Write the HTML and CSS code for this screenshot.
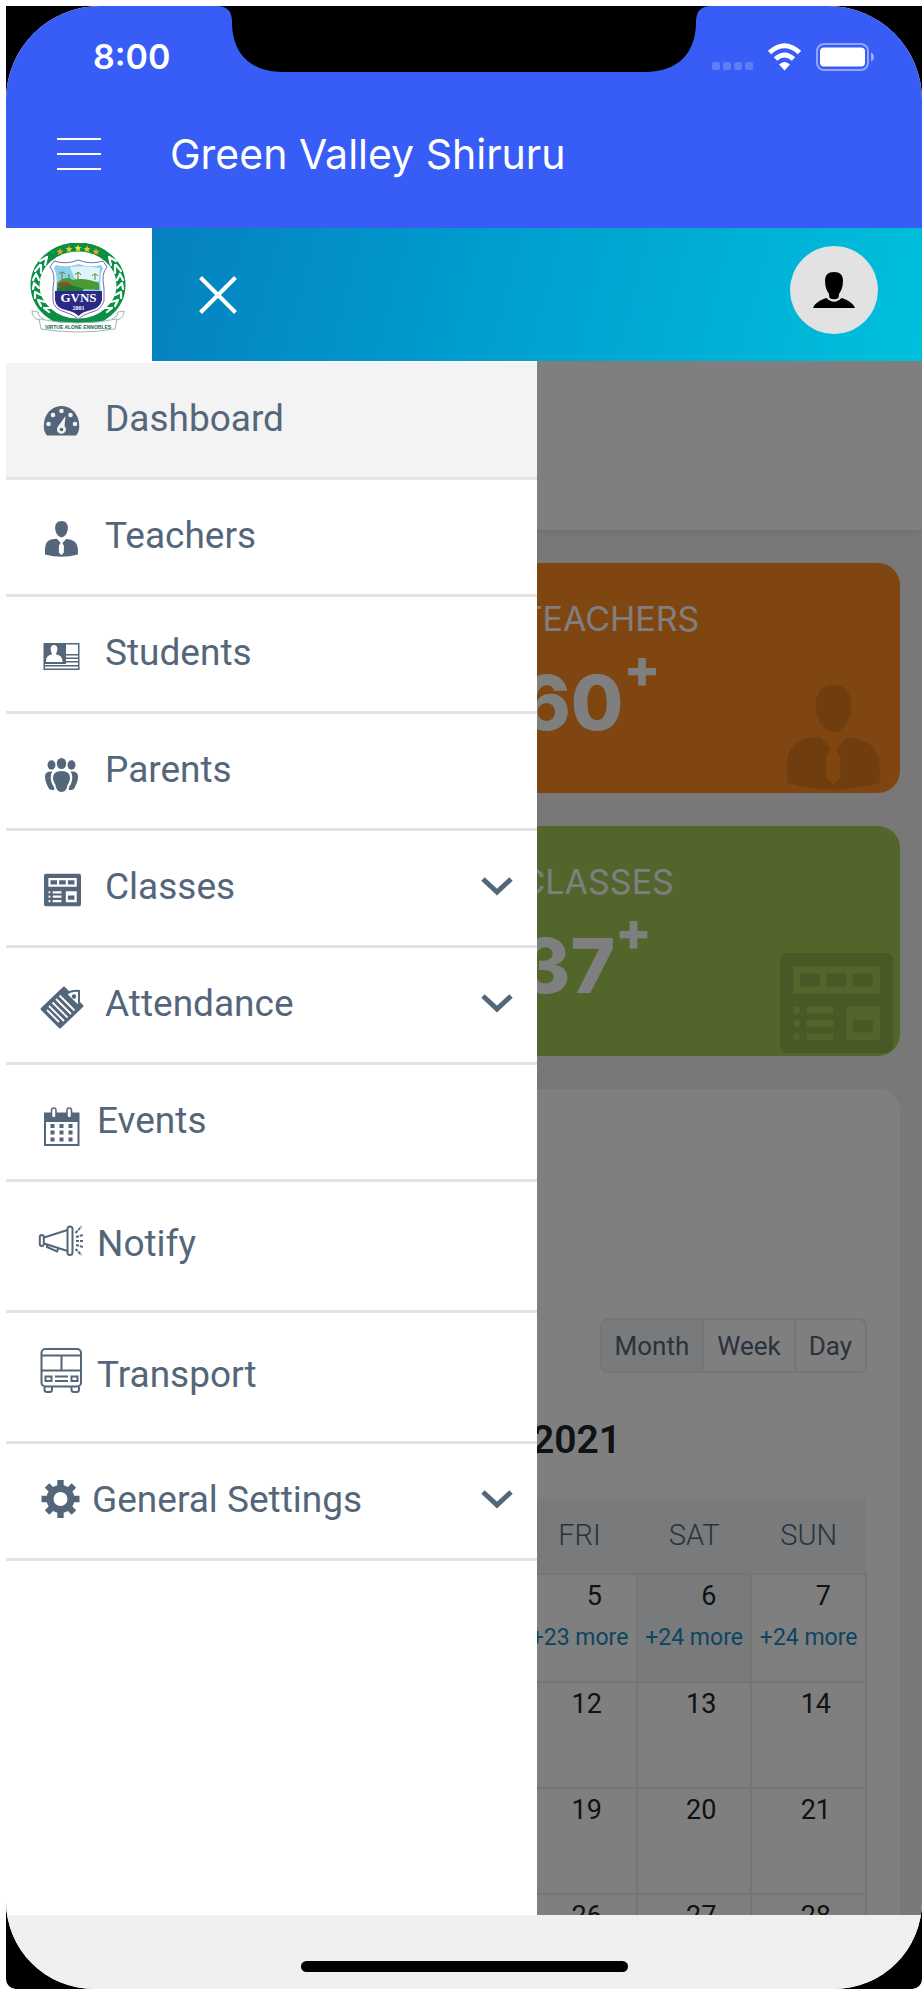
FILE: index.html
```html
<!DOCTYPE html>
<html lang="en">
<head>
<meta charset="utf-8">
<meta name="viewport" content="width=device-width, initial-scale=1">
<title>Green Valley Shiruru</title>
<link rel="stylesheet" href="styles.css">
</head>
<body>
<svg width="0" height="0" class="symbols" aria-hidden="true">
  <symbol id="person" viewBox="0 0 280 276" preserveAspectRatio="none">
    <path d="M140 0C176 0 194 22 194 52C194 84 174 124 140 124S86 84 86 52C86 22 104 0 140 0Z"/>
    <path d="M0 257V208Q4 142 75 138L100 137 132 166 118 190V242L139 262 160 242V190L148 168 180 138Q270 140 279 208V257Q140 292 0 257Z"/>
  </symbol>
  <symbol id="board" viewBox="0 0 339 260" preserveAspectRatio="none">
    <path fill-rule="evenodd" d="M20 0H319A20 18 0 0 1 339 18V242A20 18 0 0 1 319 260H20A20 18 0 0 1 0 242V18A20 18 0 0 1 20 0ZM40 35V105H300V35ZM80 140V157H160V140ZM80 174V191H160V174ZM80 209V226H160V209ZM200 140V227H300V140ZM40 148a10 9 0 1 0 20 0a10 9 0 1 0-20 0M40 183a10 9 0 1 0 20 0a10 9 0 1 0-20 0M40 218a10 9 0 1 0 20 0a10 9 0 1 0-20 0"/>
    <path d="M60 54H120V87H60ZM139 54H199V87H139ZM219 54H279V87H219ZM219 174H279V207H219Z"/>
  </symbol>
  <symbol id="chevron" viewBox="0 0 32 20">
    <path d="M2 3 16 16 30 3" fill="none" stroke="currentColor" stroke-width="5"/>
  </symbol>
</svg>
<div class="device">
  <div class="screen">
    <header class="app-header">
      <div class="status-bar">
        <span class="clock">8:00</span>
        <svg class="status-icons" width="164" height="30" viewBox="0 0 164 30" aria-hidden="true">
          <g fill="#fff" fill-opacity=".2"><rect y="20" width="8" height="8" rx="2"/><rect x="11" y="20" width="8" height="8" rx="2"/><rect x="22" y="20" width="8" height="8" rx="2"/><rect x="33" y="20" width="8" height="8" rx="2"/></g>
          <path fill="none" stroke="#fff" stroke-width="5" d="M57.500 10.500Q72.500-3 87.500 10.500M63.500 17Q72.500 9 81.500 17"/>
          <path fill="#fff" d="M67 22.500Q72.500 17.500 78 22.500L72.500 28.500Z"/>
          <rect x="105" y="2" width="51" height="26" rx="7" fill="none" stroke="#fff" stroke-opacity=".45" stroke-width="2"/>
          <rect x="108" y="5.500" width="45" height="19" rx="4" fill="#fff"/>
          <path d="M159 10.500Q162 12 162 15T159 19.500Z" fill="#fff" fill-opacity=".5"/>
        </svg>
      </div>
      <div class="nav-bar">
        <button class="menu-button" type="button" aria-label="Menu"><i></i><i></i><i></i></button>
        <h1 class="app-title">Green Valley Shiruru</h1>
      </div>
      <svg class="notch" width="494" height="66" viewBox="0 0 494 66" aria-hidden="true"><path d="M0 0C10 0 15 5 15 16C15 47 33 66 66 66H428C461 66 479 47 479 16C479 5 484 0 494 0Z"/></svg>
    </header>

    <div class="top-bar">
      <div class="brand">
        <svg width="96" height="90" viewBox="0 0 96 90" role="img" aria-label="GVNS crest">
          <ellipse cx="48" cy="42" rx="43" ry="38" fill="#fff" stroke="#0a9044" stroke-width="9"/>
          <g fill="none" stroke="#fff" stroke-width="2.200" stroke-linecap="round">
            <path d="M17 14 10 18M17 14 15 22M10 22 5 28M11 22 11 30M6 31 3 37M6 31 9 37M4 40 3 46M4 40 9 45M5 49 5 55M5 49 11 52M8 57 11 63M8 57 15 59M14 65 19 69M14 65 21 65"/>
            <path d="M79 14 86 18M79 14 81 22M86 22 91 28M85 22 85 30M90 31 93 37M90 31 87 37M92 40 93 46M92 40 87 45M91 49 91 55M91 49 85 52M88 57 85 63M88 57 81 59M82 65 77 69M82 65 75 65"/>
          </g>
          <g>
            <path fill="#f6a023" d="m30 5 1 2.500 2.500.2-2 1.700.7 2.600-2.200-1.500-2.200 1.500.7-2.600-2-1.700 2.500-.2Z"/>
            <path fill="#fbc02d" d="m39 2.500 1 2.500 2.500.2-2 1.700.7 2.600L39 8l-2.200 1.500.7-2.600-2-1.700L38 5Z"/>
            <path fill="#ffe81f" d="m48 1.500 1 2.500 2.500.2-2 1.700.7 2.600L48 7l-2.200 1.500.7-2.600-2-1.700L47 4Z"/>
            <path fill="#fbc02d" d="m57 2.500 1 2.500 2.500.2-2 1.700.7 2.600L57 8l-2.200 1.500.7-2.600-2-1.700L56 5Z"/>
            <path fill="#f6a023" d="m66 5 1 2.500 2.500.2-2 1.700.7 2.600-2.200-1.500-2.200 1.500.7-2.600-2-1.700 2.500-.2Z"/>
          </g>
          <path fill="#fff" stroke="#7b6bb0" d="M24 18Q36 22 48 17Q61 22 73 18L77 24Q71 30 74 45V58Q71 67 62 69Q52 72 48.500 76Q44 72 35 69Q24 66 23 58V45Q26 30 20 24Z"/>
          <path fill="#8cd0ea" d="M26 22Q37 25 48.500 21Q60 25 71 22L73 25Q69 32 71 50H26Q28 32 24 25Z"/>
          <path fill="#dff3f8" d="M40 24Q56 22 70 25L69 38Q50 42 44 34Z"/>
          <path fill="#4a9a35" d="M27 40Q36 32 43 37Q54 34 69 40V47L52 46 27 47Z"/>
          <path fill="#87502b" d="M28 41Q34 37 39 40L45 44 30 45Z"/>
          <path fill="#1f7a35" d="M27 45Q40 40 54 46L52 49 27 48Z"/>
          <g fill="none" stroke="#5c7f2c"><path d="M32 37V29M29 31Q32 27 35 31M39 36V31M48 37V29M45 32Q48 27 51 32M65 37V31M62 33Q65 29 68 33"/></g>
          <path fill="#2a2a84" d="M25 48H72V57Q70 65 61 67Q52 69 48.500 73Q45 69 36 67Q26 65 25 57Z"/>
          <text class="crest-name" x="48.500" y="59" text-anchor="middle">GVNS</text>
          <text class="crest-year" x="48.500" y="67" text-anchor="middle">2001</text>
          <path fill="#fff" stroke="#9db8b0" d="M9 77Q2 75 2 68L8 69 9 73 14 76M87 77Q94 75 94 68L88 69 87 73 82 76M9 76Q48 84 87 76L85 86Q48 92 11 86Z"/>
          <text class="crest-motto" x="48" y="86" text-anchor="middle">VIRTUE ALONE ENNOBLES</text>
        </svg>
      </div>
      <div class="top-actions">
        <button class="plain-button" type="button" aria-label="Close menu"><svg width="40" height="40" viewBox="0 0 40 40"><path d="M2.500 2.500 37.500 37.500M37.500 2.500 2.500 37.500" stroke="#fff" stroke-width="4"/></svg></button>
        <button class="avatar" type="button" aria-label="Profile"><svg width="44" height="38" viewBox="0 0 44 38"><path d="M22 1C28 1 31 4 31 10C31 16 29 20 27 23L26.500 27Q22 29.500 17.500 27L17 23C15 20 13 16 13 10C13 4 16 1 22 1ZM14.500 27Q22 34.500 29.500 27C36 29 41 32 43 37H1C3 32 8 29 14.500 27Z"/></svg></button>
      </div>
    </div>

    <div class="stage">
      <main class="content">
        <div class="page-head"></div>
        <section class="stats">
          <article class="stat stat-teachers">
            <h2 class="stat-label">TEACHERS</h2>
            <p class="stat-value">60<sup>+</sup></p>
            <svg class="stat-art person-art" aria-hidden="true"><use href="#person"/></svg>
          </article>
          <article class="stat stat-classes">
            <h2 class="stat-label">CLASSES</h2>
            <p class="stat-value">37<sup>+</sup></p>
            <svg class="stat-art board-art" aria-hidden="true"><use href="#board"/></svg>
          </article>
        </section>
        <section class="calendar">
          <div class="view-switch">
            <button type="button" class="active">Month</button><button type="button">Week</button><button type="button">Day</button>
          </div>
          <h2 class="calendar-title">2021</h2>
          <table class="month">
            <thead><tr><th colspan="4"></th><th>FRI</th><th>SAT</th><th>SUN</th></tr></thead>
            <tbody>
              <tr><td colspan="4"></td><td>5<a href="#">+23 more</a></td><td class="today">6<a href="#">+24 more</a></td><td>7<a href="#">+24 more</a></td></tr>
              <tr><td colspan="4"></td><td>12</td><td>13</td><td>14</td></tr>
              <tr><td colspan="4"></td><td>19</td><td>20</td><td>21</td></tr>
              <tr><td colspan="4"></td><td>26</td><td>27</td><td>28</td></tr>
            </tbody>
          </table>
        </section>
      </main>
      <div class="scrim"></div>
      <nav class="drawer">
        <ul>
          <li><a class="item current" href="#">
            <svg class="icon" viewBox="0 0 46 46"><path d="M8 40.500C4 36 4.500 30 5.500 25C8 16 15 11 22.500 11S37 16 39.500 25C40.500 30 41 36 37 40.500Z"/><g fill="#f3f3f3"><circle cx="9.500" cy="29" r="2.300"/><circle cx="14" cy="20" r="2.300"/><circle cx="22.500" cy="16" r="2.300"/><circle cx="31.500" cy="20" r="2.300"/><circle cx="36" cy="29" r="2.300"/><path d="M26.500 21 25.500 31A4.500 4.500 0 1 1 19 31.500Z"/></g><circle cx="22.500" cy="34.500" r="1.800"/></svg>
            <span>Dashboard</span></a></li>
          <li><a class="item" href="#">
            <svg class="icon" viewBox="0 0 46 46"><use href="#person" x="6" y="9" width="33" height="36"/></svg>
            <span>Teachers</span></a></li>
          <li><a class="item" href="#">
            <svg class="icon" viewBox="0 0 46 46"><path fill-rule="evenodd" d="M4.500 14H40.500V41H4.500ZM27 15.500V25H39V15.500ZM27 26.500V28.500H39V26.500ZM27 30V32H39V30ZM27 33.500V35H6V36H39V33.500ZM6 37.500V39.500H39V37.500ZM15 16C12 16 11 19 12 22C12.500 24 13 24.500 13 25.500C9 26 7 28 7 33H23.500C23.500 28 21 26 17 25.500C17 24.500 17.500 24 18 22C19 19 18 16 15 16Z"/></svg>
            <span>Students</span></a></li>
          <li><a class="item" href="#">
            <svg class="icon" viewBox="0 0 46 46"><ellipse cx="12.500" cy="19" rx="4" ry="4.700"/><ellipse cx="32.500" cy="19" rx="4" ry="4.700"/><ellipse cx="22.500" cy="17.500" rx="4.700" ry="5.500"/><path d="M22.500 25Q31 25 31 32C31 35 29.500 37 28.500 39C28 43 26 46 22.500 46S17 43 16.500 39C15.500 37 14 35 14 32Q14 25 22.500 25ZM13.500 25.500Q11 29 12 34Q12.500 38 14.500 40L15.500 43.500Q11 45 9.500 42C7 37 6 34 6 30.500Q6 25 13.500 25.500ZM31.500 25.500Q34 29 33 34Q32.500 38 30.500 40L29.500 43.500Q34 45 35.500 42C38 37 39 34 39 30.500Q39 25 31.500 25.500Z"/></svg>
            <span>Parents</span></a></li>
          <li><a class="item" href="#">
            <svg class="icon" viewBox="0 0 46 46"><use href="#board" x="5" y="10.500" width="37" height="33"/></svg>
            <span>Classes</span><svg class="chevron" aria-hidden="true"><use href="#chevron"/></svg></a></li>
          <li><a class="item" href="#">
            <svg class="icon" viewBox="0 0 46 46"><path d="M2 28 24 7Q25 6 26 7L44 25Q45 26 44 27L22 48Q21 49 20 48L2 30Q1 29 2 28Z"/><path d="m10 26 15 15M13.500 22.500l15 15M17 19l15 15M20.500 15.500l15 15M8 30l12 12" stroke="#fff" stroke-width="1.800"/><path d="M27 14Q33 10 40 11V26Q37 24 35 22Z" fill="#fff" stroke="currentColor" stroke-width="2"/><circle cx="35" cy="16.500" r="2.200"/></svg>
            <span>Attendance</span><svg class="chevron" aria-hidden="true"><use href="#chevron"/></svg></a></li>
          <li><a class="item near" href="#">
            <svg class="icon" viewBox="0 0 46 46"><path fill-rule="evenodd" d="M5 15.500H40.500V49H5ZM7 25V47H38.500V25Z"/><path d="M11.500 27h4v4h-4ZM20.500 27h4v4h-4ZM29.500 27h4v4h-4ZM11.500 33.500h4v4h-4ZM20.500 33.500h4v4h-4ZM29.500 33.500h4v4h-4ZM11.500 40.500h4v4h-4ZM20.500 40.500h4v4h-4ZM29.500 40.500h4v4h-4Z"/><g fill="#fff" stroke="currentColor" stroke-width="1.500"><rect x="12.500" y="11" width="4.500" height="10" rx="2.200"/><rect x="28" y="11" width="4.500" height="10" rx="2.200"/></g></svg>
            <span>Events</span></a></li>
          <li><a class="item near tall" href="#">
            <svg class="icon line" viewBox="0 0 46 46"><rect x=".8" y="14" width="4" height="11" rx="2"/><path d="M5 16.500 28.500 9M5 22.500 28.500 30M8 23.500V26L18 30.500 19.500 27"/><rect x="28.500" y="5.500" width="5" height="28.500" rx="2.500"/><path stroke-dasharray="3 1" d="M36.500 12 42.500 5.500M37 16 44 14M37 20H45M37 24 44 26M36.500 28 42.500 34"/></svg>
            <span>Notify</span></a></li>
          <li><a class="item near tall" href="#">
            <svg class="icon line" viewBox="0 0 46 46"><rect x="2.500" y="-3" width="39.500" height="37.500" rx="4"/><path d="M2.500 3.500H42M2.500 18.500H42M22.500 3.500V18.500M16 24.500H29M16 29H29M5.500 35V37.500Q5.500 40 8 40H10.500Q13 40 13 37.500V35M32.500 35V37.500Q32.500 40 35 40H37.500Q40 40 40 37.500V35"/><rect x="6.500" y="24.500" width="6" height="4.500"/><rect x="32.500" y="24.500" width="6" height="4.500"/></svg>
            <span>Transport</span></a></li>
          <li><a class="item nearest" href="#">
            <svg class="icon" viewBox="0 0 46 46"><g transform="translate(21.500 23)"><path fill-rule="evenodd" d="M0-14A14 14 0 0 1 0 14A14 14 0 0 1 0-14ZM0-7A7 7 0 0 0 0 7A7 7 0 0 0 0-7Z"/><path id="tooth" d="M-3.200-19H3.200V-13H-3.200ZM-3.200 13H3.200V19H-3.200Z"/><use href="#tooth" transform="rotate(45)"/><use href="#tooth" transform="rotate(90)"/><use href="#tooth" transform="rotate(135)"/></g></svg>
            <span>General Settings</span><svg class="chevron" aria-hidden="true"><use href="#chevron"/></svg></a></li>
        </ul>
      </nav>
    </div>
    <footer class="home-bar"><span class="home-indicator"></span></footer>
  </div>
</div>
</body>
</html>
```
FILE: styles.css
```css
* { box-sizing: border-box; }
body {
  margin: 0;
  height: 100vh;
  padding: 6px 2px 11px 6px;
  background: #fff;
  color: #212529;
  font-family: Roboto, "Liberation Sans", sans-serif;
}
h1, h2, p, ul { margin: 0; padding: 0; }
ul { list-style: none; }
button { font: inherit; color: inherit; cursor: pointer; }
a { color: inherit; text-decoration: none; }
.symbols { position: absolute; }

.device { height: 100%; background: #000; border-radius: 0 0 10px 10px; overflow: hidden; }
.screen {
  display: flex;
  flex-direction: column;
  height: 100%;
  overflow: hidden;
  border-radius: 94px 94px 88px 88px;
  background: #fff;
}

/* Header */
.app-header { position: relative; flex: none; background: #385df6; color: #fff; font-family: Inter, "Liberation Sans", sans-serif; }
.notch { position: absolute; top: 0; left: 50%; margin-left: -247px; }
.status-bar { display: flex; justify-content: space-between; align-items: center; height: 74px; padding: 27px 46px 0 87px; }
.clock { font-size: 34px; line-height: 46px; font-weight: 600; }
.nav-bar { display: flex; align-items: center; gap: 69px; height: 148px; padding-left: 51px; }
.menu-button { display: flex; flex-direction: column; gap: 13px; width: 44px; padding: 0; border: 0; background: none; }
.menu-button i { height: 2px; background: #fff; }
.app-title { font-size: 41px; line-height: 48px; font-weight: 400; }

/* Top bar */
.top-bar { display: flex; flex: none; height: 133px; }
.brand { flex: none; width: 146px; padding: 15px 0 0 24px; background: #fff; }
.brand svg { display: block; }
.crest-name { font: bold 13px "Liberation Serif", serif; fill: #fff; }
.crest-year { font: bold 6px "Liberation Serif", serif; fill: #fff; }
.crest-motto { font: bold 5px "Liberation Sans", sans-serif; fill: #17664f; }
.top-actions {
  display: flex;
  flex: 1;
  align-items: center;
  justify-content: space-between;
  padding: 0 44px 0 46px;
  background: linear-gradient(105deg, #0580be, #009acd 38%, #00c0dc);
}
.plain-button { display: flex; padding: 0; border: 0; background: none; }
.avatar {
  display: flex;
  align-items: center;
  justify-content: center;
  width: 88px;
  height: 88px;
  margin-bottom: 9px;
  padding: 0;
  border: 0;
  border-radius: 50%;
  background: #e2e2e2;
}

/* Stage: page content, scrim and drawer */
.stage { position: relative; flex: 1; min-height: 0; overflow: hidden; background: #f0f0f0; }
.page-head { height: 169px; background: #fff; box-shadow: 0 2px 6px rgba(0, 0, 0, .08); }
.stats { display: grid; grid-template-columns: 1fr 1fr; gap: 33px; padding: 33px 22px; }
.stat {
  position: relative;
  grid-column: 2;
  padding: 36px 40px 46px;
  border-radius: 22px;
  overflow: hidden;
  color: #fff;
  font-family: Inter, "Liberation Sans", sans-serif;
}
.stat-teachers { background: #fe8c22; }
.stat-classes { background: #a4cc56; }
.stat-label { font-size: 34px; line-height: 40px; font-weight: 400; }
.stat-value { margin-top: 18px; font-size: 76px; line-height: 90px; font-weight: 800; }
.stat-value sup { font-size: 54px; line-height: 0; font-weight: 800; vertical-align: 42px; }
.stat-art { position: absolute; bottom: 3px; fill: #000; fill-opacity: .12; }
.person-art { right: 20px; width: 93px; height: 105px; }
.board-art { right: 7px; width: 113px; height: 100px; }

.calendar { margin: 0 22px; padding: 229px 33px 0 35px; border-radius: 22px; background: #fff; }
.view-switch { display: flex; justify-content: flex-end; }
.view-switch button {
  height: 55px;
  margin-left: -2px;
  padding: 0 13px;
  border: 2px solid #ebedf0;
  background: #fff;
  color: #54667a;
  font-size: 26px;
}
.view-switch button:first-child { border-radius: 8px 0 0 8px; }
.view-switch button:last-child { border-radius: 0 8px 8px 0; }
.view-switch .active { background: #f2f5f9; }
.calendar-title { margin: 43px 0 35px; padding-right: 246px; text-align: right; font-size: 39px; line-height: 48px; font-weight: 600; }
.month { width: 100%; table-layout: fixed; border-collapse: collapse; }
.month th { height: 75px; padding: 0 0 2px; background: #f2f5f9; color: #54667a; font-size: 29px; font-weight: 300; }
.month td {
  height: 106px;
  padding: 3px 0 0;
  border: 2px solid #e9ebee;
  vertical-align: top;
  text-align: right;
  font-size: 27px;
  line-height: 36px;
}
.month td:not([colspan]) { padding-right: 34px; }
.month tbody tr:first-child td { height: 108px; }
.month a { display: block; margin: 8px -34px 0 0; text-align: center; color: #1888c4; font-size: 23px; line-height: 32px; }
.month .today { background: #f2f5f9; }

.scrim { position: absolute; inset: 0; background: rgba(0, 0, 0, .5); }
.drawer {
  position: absolute;
  inset: 0 auto 0 0;
  width: 58%;
  padding-top: 2px;
  overflow: hidden;
  background: #fff;
  color: #54667a;
}
.item {
  display: flex;
  align-items: center;
  height: 117px;
  padding: 0 24px 4px 33px;
  border-bottom: 3px solid #e4e4e4;
  font-size: 37px;
  line-height: 44px;
}
.item span { padding-top: 2px; }
.item.current { background: #f3f3f3; }
.item.tall { height: 131px; }
.item.tall span { padding-top: 0; }
.icon { flex: none; width: 46px; height: 46px; margin-right: 20px; overflow: visible; fill: currentColor; }
.near .icon { margin-right: 12px; }
.nearest .icon { margin-right: 7px; }
.icon.line { fill: none; stroke: currentColor; stroke-width: 2; }
.chevron { width: 32px; height: 20px; margin-left: auto; }

/* Home bar */
.home-bar { display: flex; flex: none; justify-content: center; align-items: flex-end; height: 74px; padding-bottom: 17px; background: #f0f0f0; }
.home-indicator { width: 327px; height: 11px; border-radius: 6px; background: #000; }
```
